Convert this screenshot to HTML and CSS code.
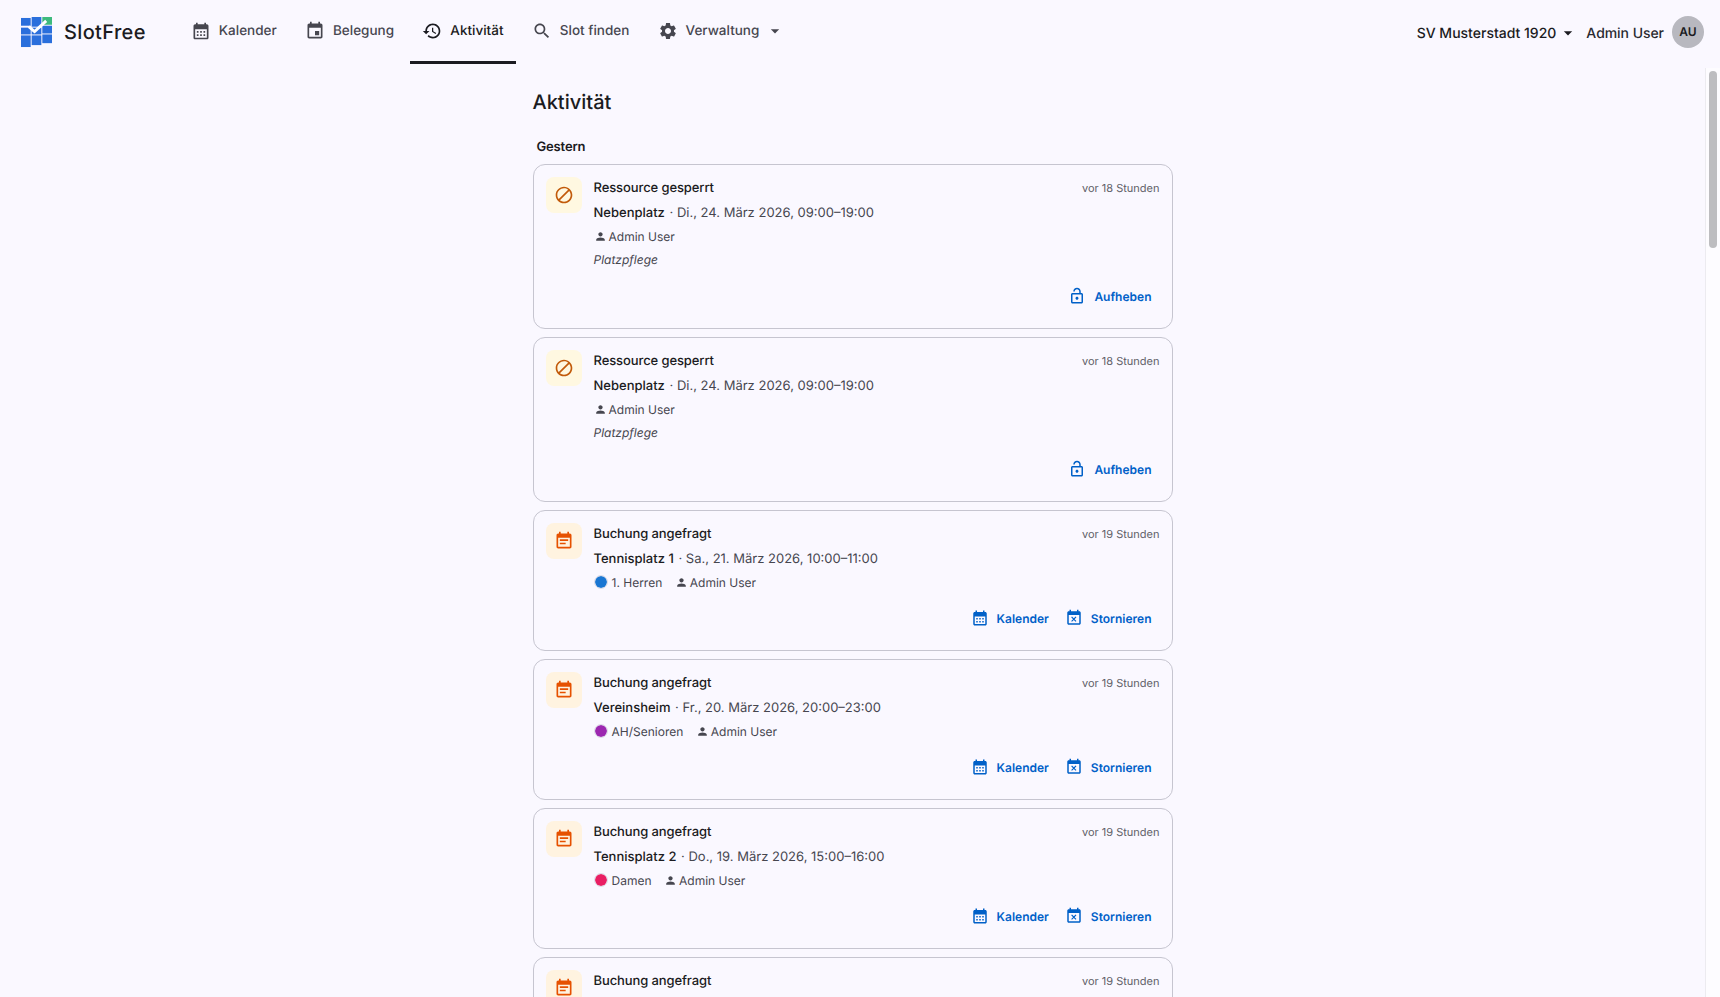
FILE: index.html
```html
<!DOCTYPE html>
<html lang="de">
<head>
<meta charset="utf-8">
<title>SlotFree – Aktivität</title>
<link rel="stylesheet" href="styles.css">
</head>
<body>
<svg class="sprite" xmlns="http://www.w3.org/2000/svg">
  <symbol id="i-calendar" viewBox="0 0 24 24"><path d="M19 4h-1V2h-2v2H8V2H6v2H5c-1.11 0-1.99.9-1.99 2L3 20c0 1.1.89 2 2 2h14c1.1 0 2-.9 2-2V6c0-1.1-.9-2-2-2zm0 16H5V10h14v10zM9 14H7v-2h2v2zm4 0h-2v-2h2v2zm4 0h-2v-2h2v2zm-8 4H7v-2h2v2zm4 0h-2v-2h2v2zm4 0h-2v-2h2v2z"/></symbol>
  <symbol id="i-event" viewBox="0 0 24 24"><path d="M17 12h-5v5h5v-5zM16 1v2H8V1H6v2H5c-1.11 0-1.99.9-1.99 2L3 19c0 1.1.89 2 2 2h14c1.1 0 2-.9 2-2V5c0-1.1-.9-2-2-2h-1V1h-2zm3 18H5V8h14v11z"/></symbol>
  <symbol id="i-history" viewBox="0 0 24 24"><path d="M13 3c-4.97 0-9 4.03-9 9H1l3.89 3.89.07.14L9 12H6c0-3.87 3.13-7 7-7s7 3.13 7 7-3.13 7-7 7c-1.93 0-3.68-.79-4.94-2.06l-1.42 1.42C8.27 19.99 10.51 21 13 21c4.97 0 9-4.03 9-9s-4.03-9-9-9zm-1 5v5l4.28 2.54.72-1.21-3.5-2.08V8H12z"/></symbol>
  <symbol id="i-search" viewBox="0 0 24 24"><path d="M15.5 14h-.79l-.28-.27C15.41 12.59 16 11.11 16 9.5 16 5.91 13.09 3 9.5 3S3 5.91 3 9.5 5.91 16 9.5 16c1.61 0 3.09-.59 4.23-1.57l.27.28v.79l5 4.99L20.49 19l-4.99-5zm-6 0C7.01 14 5 11.99 5 9.5S7.01 5 9.5 5 14 7.01 14 9.5 11.99 14 9.5 14z"/></symbol>
  <symbol id="i-settings" viewBox="0 0 24 24"><path d="M19.14 12.94c.04-.3.06-.61.06-.94 0-.32-.02-.64-.07-.94l2.03-1.58c.18-.14.23-.41.12-.61l-1.92-3.32c-.12-.22-.37-.29-.59-.22l-2.39.96c-.5-.38-1.03-.7-1.62-.94l-.36-2.54c-.04-.24-.24-.41-.48-.41h-3.84c-.24 0-.43.17-.47.41l-.36 2.54c-.59.24-1.13.57-1.62.94l-2.39-.96c-.22-.08-.47 0-.59.22L2.74 8.87c-.12.21-.08.47.12.61l2.03 1.58c-.05.3-.09.63-.09.94s.02.64.07.94l-2.03 1.58c-.18.14-.23.41-.12.61l1.92 3.32c.12.22.37.29.59.22l2.39-.96c.5.38 1.03.7 1.62.94l.36 2.54c.05.24.24.41.48.41h3.84c.24 0 .44-.17.47-.41l.36-2.54c.59-.24 1.13-.56 1.62-.94l2.39.96c.22.08.47 0 .59-.22l1.92-3.32c.12-.22.07-.47-.12-.61l-2.01-1.58zM12 15.6c-1.98 0-3.6-1.62-3.6-3.6s1.62-3.6 3.6-3.6 3.6 1.62 3.6 3.6-1.62 3.6-3.6 3.6z"/></symbol>
  <symbol id="i-caret" viewBox="0 0 24 24"><path d="M7 10l5 5 5-5z"/></symbol>
  <symbol id="i-block" viewBox="0 0 24 24"><path d="M12 2C6.48 2 2 6.48 2 12s4.48 10 10 10 10-4.48 10-10S17.52 2 12 2zM4 12c0-4.42 3.58-8 8-8 1.85 0 3.55.63 4.9 1.69L5.69 16.9C4.63 15.55 4 13.85 4 12zm8 8c-1.85 0-3.55-.63-4.9-1.69L18.31 7.1C19.37 8.45 20 10.15 20 12c0 4.42-3.58 8-8 8z"/></symbol>
  <symbol id="i-lock" viewBox="0 0 24 24"><path d="M12 17c1.1 0 2-.9 2-2s-.9-2-2-2-2 .9-2 2 .9 2 2 2zm6-9h-1V6c0-2.76-2.24-5-5-5S7 3.24 7 6h2c0-1.66 1.34-3 3-3s3 1.34 3 3v2H6c-1.1 0-2 .9-2 2v10c0 1.1.9 2 2 2h12c1.1 0 2-.9 2-2V10c0-1.1-.9-2-2-2zm0 12H6V10h12v10z"/></symbol>
  <symbol id="i-note" viewBox="0 0 24 24"><path d="M17 10H7v2h10v-2zm2-7h-1V1h-2v2H8V1H6v2H5c-1.11 0-1.99.9-1.99 2L3 19c0 1.1.89 2 2 2h14c1.1 0 2-.9 2-2V5c0-1.1-.9-2-2-2zm0 16H5V8h14v11zm-5-5H7v2h7v-2z"/></symbol>
  <symbol id="i-busy" viewBox="0 0 24 24"><path d="M9.31 17l2.44-2.44L14.19 17l1.06-1.06-2.44-2.44 2.44-2.44L14.19 10l-2.44 2.44L9.31 10l-1.06 1.06 2.44 2.44-2.44 2.44L9.31 17zM19 3h-1V1h-2v2H8V1H6v2H5c-1.11 0-1.99.9-1.99 2L3 19c0 1.1.89 2 2 2h14c1.1 0 2-.9 2-2V5c0-1.1-.9-2-2-2zm0 16H5V8h14v11z"/></symbol>
  <symbol id="i-person" viewBox="0 0 24 24"><path d="M12 12c2.21 0 4-1.79 4-4s-1.79-4-4-4-4 1.79-4 4 1.79 4 4 4zm0 2c-2.67 0-8 1.34-8 4v2h16v-2c0-2.66-5.33-4-8-4z"/></symbol>
</svg>

<header class="topbar">
  <a class="brand">
    <svg class="brand-logo" viewBox="0 0 32 32" xmlns="http://www.w3.org/2000/svg">
      <rect x="0" y="1" width="10" height="8" fill="#2a6fdc"/>
      <rect x="11" y="0" width="10" height="10" fill="#2a6fdc"/>
      <rect x="22" y="0" width="10" height="8" fill="#3dba7d"/>
      <rect x="22" y="9" width="10" height="8" fill="#2a6fdc"/>
      <rect x="0" y="11" width="10" height="7" fill="#2a6fdc"/>
      <rect x="11" y="11" width="10" height="7" fill="#2a6fdc"/>
      <rect x="0" y="19" width="10" height="12" fill="#2a6fdc"/>
      <rect x="11" y="19" width="10" height="10" fill="#2a6fdc"/>
      <rect x="22" y="18" width="10" height="9" fill="#2a6fdc"/>
      <path d="M8 10l6 5L26 4" fill="none" stroke="#fff" stroke-width="3"/>
    </svg>
    <span class="brand-name">SlotFree</span>
  </a>
  <nav class="tabs">
    <a class="tab"><svg class="tab-icon"><use href="#i-calendar"/></svg>Kalender</a>
    <a class="tab"><svg class="tab-icon"><use href="#i-event"/></svg>Belegung</a>
    <a class="tab tab-active"><svg class="tab-icon"><use href="#i-history"/></svg>Aktivität</a>
    <a class="tab"><svg class="tab-icon"><use href="#i-search"/></svg>Slot finden</a>
    <a class="tab"><svg class="tab-icon"><use href="#i-settings"/></svg>Verwaltung<svg class="tab-caret"><use href="#i-caret"/></svg></a>
  </nav>
  <div class="account">
    <span class="club">SV Musterstadt 1920<svg class="club-caret"><use href="#i-caret"/></svg></span>
    <span class="user">Admin User</span>
    <span class="avatar">AU</span>
  </div>
</header>

<div class="body-row">
  <main class="scroller">
    <div class="column">
      <h1 class="page-title">Aktivität</h1>
      <h2 class="group-title">Gestern</h2>
      <div class="feed">

        <article class="card">
          <div class="card-row">
            <span class="badge badge-amber"><svg class="badge-icon"><use href="#i-block"/></svg></span>
            <div class="card-body">
              <div class="card-head"><span class="card-title">Ressource gesperrt</span><span class="card-time">vor 18 Stunden</span></div>
              <div class="card-line"><strong class="place">Nebenplatz</strong> · Di., 24. März 2026, 09:00–19:00</div>
              <div class="card-meta"><span class="meta-item"><svg class="meta-icon"><use href="#i-person"/></svg>Admin User</span></div>
              <div class="card-note">Platzpflege</div>
            </div>
          </div>
          <div class="card-actions"><a class="action"><svg class="action-icon"><use href="#i-lock"/></svg>Aufheben</a></div>
        </article>

        <article class="card">
          <div class="card-row">
            <span class="badge badge-amber"><svg class="badge-icon"><use href="#i-block"/></svg></span>
            <div class="card-body">
              <div class="card-head"><span class="card-title">Ressource gesperrt</span><span class="card-time">vor 18 Stunden</span></div>
              <div class="card-line"><strong class="place">Nebenplatz</strong> · Di., 24. März 2026, 09:00–19:00</div>
              <div class="card-meta"><span class="meta-item"><svg class="meta-icon"><use href="#i-person"/></svg>Admin User</span></div>
              <div class="card-note">Platzpflege</div>
            </div>
          </div>
          <div class="card-actions"><a class="action"><svg class="action-icon"><use href="#i-lock"/></svg>Aufheben</a></div>
        </article>

        <article class="card">
          <div class="card-row">
            <span class="badge badge-orange"><svg class="badge-icon"><use href="#i-note"/></svg></span>
            <div class="card-body">
              <div class="card-head"><span class="card-title">Buchung angefragt</span><span class="card-time">vor 19 Stunden</span></div>
              <div class="card-line"><strong class="place">Tennisplatz 1</strong> · Sa., 21. März 2026, 10:00–11:00</div>
              <div class="card-meta"><span class="meta-item"><span class="dot dot-blue"></span>1. Herren</span><span class="meta-item"><svg class="meta-icon"><use href="#i-person"/></svg>Admin User</span></div>
            </div>
          </div>
          <div class="card-actions"><a class="action"><svg class="action-icon"><use href="#i-calendar"/></svg>Kalender</a><a class="action"><svg class="action-icon"><use href="#i-busy"/></svg>Stornieren</a></div>
        </article>

        <article class="card">
          <div class="card-row">
            <span class="badge badge-orange"><svg class="badge-icon"><use href="#i-note"/></svg></span>
            <div class="card-body">
              <div class="card-head"><span class="card-title">Buchung angefragt</span><span class="card-time">vor 19 Stunden</span></div>
              <div class="card-line"><strong class="place">Vereinsheim</strong> · Fr., 20. März 2026, 20:00–23:00</div>
              <div class="card-meta"><span class="meta-item"><span class="dot dot-purple"></span>AH/Senioren</span><span class="meta-item"><svg class="meta-icon"><use href="#i-person"/></svg>Admin User</span></div>
            </div>
          </div>
          <div class="card-actions"><a class="action"><svg class="action-icon"><use href="#i-calendar"/></svg>Kalender</a><a class="action"><svg class="action-icon"><use href="#i-busy"/></svg>Stornieren</a></div>
        </article>

        <article class="card">
          <div class="card-row">
            <span class="badge badge-orange"><svg class="badge-icon"><use href="#i-note"/></svg></span>
            <div class="card-body">
              <div class="card-head"><span class="card-title">Buchung angefragt</span><span class="card-time">vor 19 Stunden</span></div>
              <div class="card-line"><strong class="place">Tennisplatz 2</strong> · Do., 19. März 2026, 15:00–16:00</div>
              <div class="card-meta"><span class="meta-item"><span class="dot dot-pink"></span>Damen</span><span class="meta-item"><svg class="meta-icon"><use href="#i-person"/></svg>Admin User</span></div>
            </div>
          </div>
          <div class="card-actions"><a class="action"><svg class="action-icon"><use href="#i-calendar"/></svg>Kalender</a><a class="action"><svg class="action-icon"><use href="#i-busy"/></svg>Stornieren</a></div>
        </article>

        <article class="card">
          <div class="card-row">
            <span class="badge badge-orange"><svg class="badge-icon"><use href="#i-note"/></svg></span>
            <div class="card-body">
              <div class="card-head"><span class="card-title">Buchung angefragt</span><span class="card-time">vor 19 Stunden</span></div>
            </div>
          </div>
        </article>

      </div>
    </div>
  </main>
  <div class="scrollbar"><div class="scrollbar-thumb"></div></div>
</div>
</body>
</html>
```
FILE: styles.css
```css
* { box-sizing: border-box; }
html, body { height: 100%; margin: 0; }
body {
  display: flex;
  flex-direction: column;
  overflow: hidden;
  background: #faf8ff;
  color: #1b1b21;
  font-family: Inter, "Liberation Sans", sans-serif;
  font-size: 14px;
  text-rendering: geometricPrecision;
}
.sprite { display: none; }

/* top bar */
.topbar {
  flex: none;
  display: flex;
  align-items: center;
  height: 64px;
  padding: 0 16px 0 21px;
}
.brand { display: flex; align-items: center; }
.brand-logo { width: 31px; height: 31px; margin-top: 1px; display: block; }
.brand-name { margin-left: 12px; font-size: 20px; font-weight: 500; letter-spacing: .35px; }
.tabs { display: flex; align-self: stretch; gap: 4.25px; margin-left: 33px; }
.tab {
  display: flex;
  align-items: center;
  gap: 8px;
  height: 64px;
  padding: 1px 12px 0;
  font-size: 13.5px;
  font-weight: 500;
  color: #46464f;
  border-bottom: 3px solid transparent;
}
.tab-icon { width: 20px; height: 20px; fill: currentColor; flex: none; }
.tab-caret { width: 20px; height: 20px; fill: currentColor; margin-left: -2px; }
.tab-active { color: #1b1b21; border-bottom-color: #1b1b21; }
.account { display: flex; align-items: center; margin-left: auto; }
.club { display: flex; align-items: center; padding-top: 2px; font-weight: 500; }
.club-caret { width: 20px; height: 20px; fill: currentColor; margin-left: 2px; }
.user { margin-left: 8px; padding-top: 2px; font-weight: 500; color: #2a2a30; letter-spacing: -.05px; }
.avatar {
  display: flex;
  align-items: center;
  justify-content: center;
  width: 32px;
  height: 32px;
  margin-left: 8px;
  padding-bottom: 2px;
  border-radius: 50%;
  background: #b8b8bf;
  font-size: 12px;
  font-weight: 600;
}

/* content */
.body-row { flex: 1; min-height: 0; display: flex; margin-top: 4px; }
.scroller { flex: 1; min-width: 0; overflow: hidden; }
.column { width: 640px; margin: 0 auto; padding-top: 20px; }
.page-title { margin: 0; font-size: 20px; line-height: 28px; font-weight: 500; }
.group-title { margin: 21px 0 0 4px; font-size: 13px; line-height: 20px; font-weight: 600; letter-spacing: -.15px; }
.feed { display: flex; flex-direction: column; gap: 8px; margin-top: 7px; }

/* card */
.card {
  border: 1px solid #c6c5d0;
  border-radius: 12px;
  padding: 12px 12px 16px;
}
.card-row { display: flex; gap: 12px; }
.badge {
  flex: none;
  display: flex;
  align-items: center;
  justify-content: center;
  width: 36px;
  height: 36px;
  border-radius: 8px;
}
.badge-amber { background: #fff8e1; color: #c25a0a; }
.badge-orange { background: #fff3e0; color: #e65100; }
.badge-icon { width: 20px; height: 20px; fill: currentColor; }
.card-body { flex: 1; min-width: 0; padding-top: 1px; }
.card-head { display: flex; justify-content: space-between; align-items: center; height: 20px; }
.card-title { font-size: 13px; font-weight: 500; letter-spacing: -.1px; }
.card-time { font-size: 11px; color: #5f5f68; }
.card-line { margin-top: 5px; font-size: 13px; line-height: 20px; color: #46464f; }
.place { font-weight: 500; color: #1b1b21; margin-right: 1px; }
.card-meta { display: flex; gap: 12.5px; margin-top: 4px; height: 18px; align-items: center; font-size: 12px; color: #46464f; }
.meta-item { display: flex; align-items: center; gap: 2px; }
.meta-icon { width: 13px; height: 13px; fill: currentColor; }
.dot { width: 14px; height: 14px; border-radius: 50%; margin-right: 2px; border: 1px solid #dcdce6; background-clip: padding-box; }
.dot-blue { background-color: #1976d2; }
.dot-purple { background-color: #9c27b0; }
.dot-pink { background-color: #e91e63; }
.card-note { margin-top: 6px; height: 18px; line-height: 18px; font-size: 12px; font-style: italic; color: #46464f; }
.card-actions { display: flex; justify-content: flex-end; gap: 0; margin-top: 11px; }
.action {
  display: flex;
  align-items: center;
  gap: 8px;
  height: 32px;
  padding: 0 8px;
  font-size: 12px;
  font-weight: 600;
  color: #0060c8;
}
.action-icon { width: 18px; height: 18px; fill: currentColor; }

/* scrollbar */
.scrollbar {
  flex: none;
  width: 15px;
  padding: 3px 3px 0 3px;
  border-left: 1px solid #ecebf0;
  background: #fdfcff;
}
.scrollbar-thumb { width: 8px; height: 177px; border-radius: 4px; background: #bdbdc0; }
```
